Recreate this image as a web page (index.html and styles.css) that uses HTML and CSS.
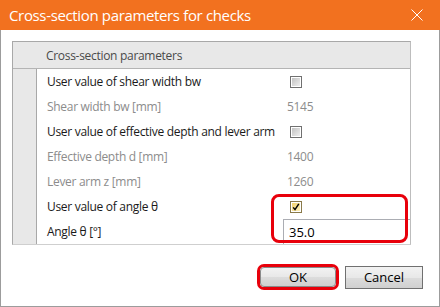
FILE: index.html
```html
<!DOCTYPE html>
<html lang="en">
<head>
    <meta charset="UTF-8">
    <title>Cross-section parameters for checks</title>
    <link rel="stylesheet" href="styles.css">
</head>
<body>
    <div class="dialog">
        <div class="titlebar">
            <span class="title">Cross-section parameters for checks</span>
            <svg class="close" width="12" height="12" viewBox="0 0 12 12">
                <path d="M0.5 0.5 L11.5 11.5 M11.5 0.5 L0.5 11.5" stroke="#fff" stroke-width="1" fill="none"/>
            </svg>
        </div>
        <div class="body">
            <div class="grid">
                <div class="grid-header">Cross-section parameters</div>
                <div class="grid-row">
                    <div class="gutter"></div>
                    <div class="name">User value of shear width bw</div>
                    <div class="value"><span class="check"></span></div>
                </div>
                <div class="grid-row">
                    <div class="gutter"></div>
                    <div class="name disabled">Shear width bw [mm]</div>
                    <div class="value disabled">5145</div>
                </div>
                <div class="grid-row">
                    <div class="gutter"></div>
                    <div class="name">User value of effective depth and lever arm</div>
                    <div class="value"><span class="check"></span></div>
                </div>
                <div class="grid-row">
                    <div class="gutter"></div>
                    <div class="name disabled">Effective depth d [mm]</div>
                    <div class="value disabled">1400</div>
                </div>
                <div class="grid-row">
                    <div class="gutter"></div>
                    <div class="name disabled">Lever arm z [mm]</div>
                    <div class="value disabled">1260</div>
                </div>
                <div class="grid-row">
                    <div class="gutter"></div>
                    <div class="name">User value of angle θ</div>
                    <div class="value">
                        <span class="check checked">
                            <svg width="8" height="8" viewBox="0 0 8 8"><path d="M1.2 4.4 L3 6.6 L6.8 0.8" stroke="#000" stroke-width="1.5" fill="none"/></svg>
                        </span>
                    </div>
                </div>
                <div class="grid-row">
                    <div class="gutter"></div>
                    <div class="name">Angle θ [°]</div>
                    <div class="value"><div class="textbox">35.0</div></div>
                </div>
                <div class="highlight highlight-angle"></div>
            </div>
            <div class="buttons">
                <span class="highlight-ok"><button class="btn btn-ok">OK</button></span>
                <button class="btn">Cancel</button>
            </div>
        </div>
    </div>
</body>
</html>
```

FILE: styles.css
```css
body { margin: 0; font-family: "Open Sans", "Noto Sans", sans-serif; }
.dialog { width: 440px; height: 307px; display: flex; flex-direction: column; }
.titlebar {
    height: 30px;
    background-color: #f2711f;
    display: flex;
    align-items: center;
    justify-content: space-between;
    padding: 0 17px 0 9px;
    color: white;
    flex-shrink: 0;
}
.title { font-size: 15px; letter-spacing: -0.35px; }
.close { display: block; }
.body {
    flex: 1;
    border: 1px solid #9c9c9c;
    border-top: none;
    background: white;
    padding: 11px 28px 0 11px;
    display: flex;
    flex-direction: column;
}
.grid { position: relative; border: 1px solid #a8a8a8; border-bottom-color: #cfcfcf; border-right-color: #bdbdbd; font-size: 12px; letter-spacing: -0.3px; }
.grid-header {
    height: 26px;
    background-color: #e8e8e8;
    border-bottom: 1px solid #b4b4b4;
    display: flex;
    align-items: center;
    padding-left: 33px;
    color: #4a4a4a;
}
.grid-row { display: flex; height: 25px; align-items: center; }
.gutter { width: 23px; align-self: stretch; background-color: #e8e8e8; border-right: 1px solid #a8a8a8; }
.name { width: 236px; padding-left: 10px; color: #1a1a1a; white-space: nowrap; }
.value { flex: 1; align-self: stretch; display: flex; align-items: center; padding-left: 4px; }
.disabled { color: #8c8c8c; }
.check {
    width: 10px;
    height: 10px;
    margin-left: 3px;
    border: 1px solid #707070;
    box-shadow: inset 0 0 0 1px #fff;
    background: linear-gradient(135deg, #bdbdbd, #f4f4f4);
    display: flex;
    align-items: center;
    justify-content: center;
}
.check.checked { background: linear-gradient(135deg, #f3cf62, #fff3c4); border-color: #8a7a4a; }
.textbox {
    flex: 1;
    align-self: stretch;
    margin-left: -4px;
    border: 1px solid #abadb3;
    border-right: none;
    border-bottom: none;
    display: flex;
    align-items: center;
    padding-left: 5px;
    color: #000;
    font-size: 13px;
    letter-spacing: 0;
}
.highlight { position: absolute; border: 3px solid #e8000b; border-radius: 8px; }
.highlight-angle { left: 258px; top: 152px; width: 131px; height: 43px; }
.buttons { display: flex; justify-content: flex-end; align-items: center; gap: 6px; margin-top: 19px; margin-right: -12px; }
.highlight-ok { display: flex; border: 3px solid #e8000b; border-radius: 7px; }
.btn {
    width: 78px;
    height: 23px;
    border: 1px solid #707070;
    background: linear-gradient(#f2f2f2, #e8e8e8 50%, #dcdcdc 51%, #d0d0d0);
    font-family: "Open Sans", "Noto Sans", sans-serif;
    font-size: 13px;
    color: #000;
    padding: 0;
}
.btn-ok { width: 76px; height: 20px; border-color: #8a8a8a; border-radius: 4px; }
```
